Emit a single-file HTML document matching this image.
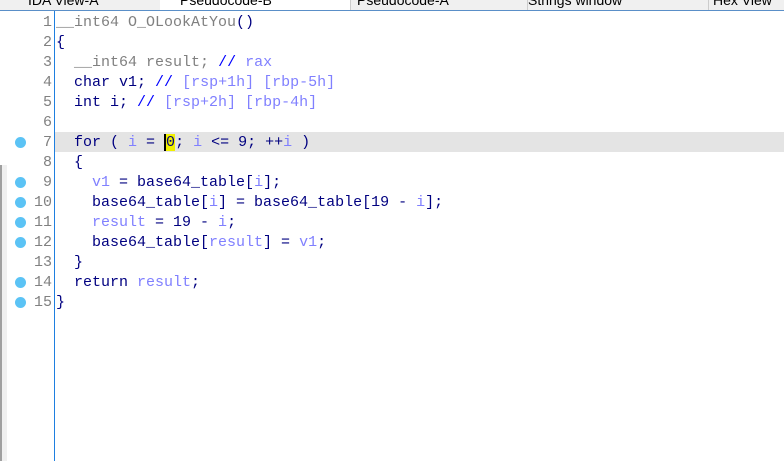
<!DOCTYPE html><html><head><style>
body{margin:0;width:784px;height:461px;overflow:hidden;background:#fff;position:relative;font-family:"Liberation Mono",monospace;}
.tabs{position:absolute;left:0;top:0;width:784px;height:10px;background:#f0f0f0;border-bottom:1px solid #5a8fc8;overflow:hidden;font:14px "Liberation Sans",sans-serif;}
.tab{position:absolute;top:-8px;height:18px;border-right:1px solid #ccc;color:#000;white-space:nowrap}
.tab.act{background:#fff;}
.gut{position:absolute;left:54px;top:11px;width:1px;height:450px;background:#1e7fe0}
.strip{position:absolute;left:0;top:165px;width:7px;height:296px;background:#f0f0f0;border-left:2px solid #a0a0a0;box-sizing:border-box}
.ln{position:absolute;left:0;width:52px;text-align:right;color:#808080;font-size:15px;line-height:20px}
.dot{position:absolute;left:15px;width:11px;height:11px;border-radius:6px;background:#5bc3f5}
.code{position:absolute;left:56px;font-size:15px;line-height:20px;white-space:pre;color:#000080}
.hl{position:absolute;left:55px;top:132px;width:729px;height:20px;background:#e4e4e4}
.g{color:#808080}.v{color:#8080ff}.c{color:#0000ff}.b{color:#000080}
.cur{background:#f0f000;border-left:2px solid #000}
</style></head><body>
<div class="tabs">
<div class="tab" style="left:8px;width:150px;padding-left:20px">IDA View-A</div>
<div class="tab act" style="left:160px;width:170px;padding-left:20px">Pseudocode-B</div>
<div class="tab" style="left:332px;width:170px;padding-left:25px">Pseudocode-A</div>
<div class="tab" style="left:503px;width:180px;padding-left:25px">Strings window</div>
<div class="tab" style="left:688px;width:100px;padding-left:25px">Hex View</div>
</div>
<div class="strip"></div>
<div class="hl"></div>
<div class="gut"></div>
<div class="ln" style="top:13px">1<br>2<br>3<br>4<br>5<br>6<br>7<br>8<br>9<br>10<br>11<br>12<br>13<br>14<br>15</div>
<div class="dot" style="top:137px"></div>
<div class="dot" style="top:177px"></div>
<div class="dot" style="top:197px"></div>
<div class="dot" style="top:217px"></div>
<div class="dot" style="top:237px"></div>
<div class="dot" style="top:277px"></div>
<div class="dot" style="top:297px"></div>
<div class="code" style="top:13px"><span class="g">__int64 O_OLookAtYou</span><span class="b">()</span>
<span class="b">{</span>
  <span class="g">__int64 result;</span> <span class="c">//</span> <span class="v">rax</span>
  char v1; <span class="c">//</span> <span class="v">[rsp+1h] [rbp-5h]</span>
  int i; <span class="c">//</span> <span class="v">[rsp+2h] [rbp-4h]</span>

  for ( <span class="v">i</span> = <span class="cur">0</span>; <span class="v">i</span> &lt;= 9; ++<span class="v">i</span> )
  {
    <span class="v">v1</span> = base64_table[<span class="v">i</span>];
    base64_table[<span class="v">i</span>] = base64_table[19 - <span class="v">i</span>];
    <span class="v">result</span> = 19 - <span class="v">i</span>;
    base64_table[<span class="v">result</span>] = <span class="v">v1</span>;
  }
  return <span class="v">result</span>;
<span class="b">}</span></div>
</body></html>
